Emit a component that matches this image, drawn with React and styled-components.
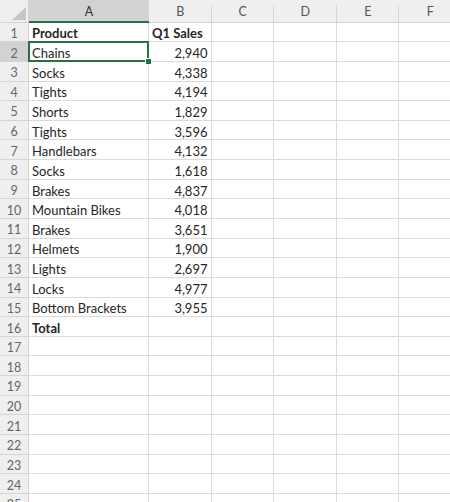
import React from 'react';
import styled, { createGlobalStyle, css } from 'styled-components';

const colors = {
  header: '#efefef',
  headerActive: '#d2d2d2',
  grid: '#dadada',
  headerLine: '#d4d4d4',
  green: '#217346',
  text: '#262626',
  muted: '#666666',
};

const GlobalStyle = createGlobalStyle`
  html, body {
    margin: 0;
    padding: 0;
    background: #ffffff;
    overflow: hidden;
  }
`;

const Sheet = styled.div`
  display: grid;
  grid-template-columns: 29px 120px repeat(5, 62.5px);
  grid-template-rows: 22.6px;
  grid-auto-rows: 19.65px;
  font-family: Lato, 'Open Sans', sans-serif;
  font-size: 13px;
  color: ${colors.text};
  width: 450px;
  height: 502px;
  overflow: hidden;
`;

const Corner = styled.div`
  background: ${colors.header};
  border-right: 1px solid ${colors.headerLine};
  border-bottom: 1px solid ${colors.headerLine};
  box-sizing: border-box;
  position: relative;

  &:after {
    content: '';
    position: absolute;
    right: 2px;
    bottom: 2px;
    width: 0;
    height: 0;
    border-left: 14px solid transparent;
    border-bottom: 13px solid #c6c6c6;
  }
`;

const ColHead = styled.div`
  background: ${p => (p.$active ? colors.headerActive : colors.header)};
  border-bottom: ${p => (p.$active ? `2px solid ${colors.green}` : `1px solid ${colors.headerLine}`)};
  box-sizing: border-box;
  display: flex;
  align-items: center;
  justify-content: center;
  color: ${p => (p.$active ? '#333' : '#555')};
  font-size: 12.5px;
  padding-top: 2px;
  position: relative;

  &:after {
    content: '';
    position: absolute;
    right: 0;
    top: 5px;
    bottom: 0;
    width: 1px;
    background: ${colors.headerLine};
  }
`;

const RowHead = styled.div`
  background: ${p => (p.$active ? colors.headerActive : colors.header)};
  border-right: 1px solid ${p => (p.$active ? colors.green : colors.headerLine)};
  border-bottom: 1px solid ${colors.headerLine};
  box-sizing: border-box;
  display: flex;
  align-items: center;
  justify-content: center;
  color: ${colors.muted};
  font-size: 12.5px;
  padding-top: 3px;
`;

const Cell = styled.div`
  border-right: 1px solid ${colors.grid};
  border-bottom: 1px solid ${colors.grid};
  box-sizing: border-box;
  display: flex;
  align-items: center;
  justify-content: ${p => (p.$num ? 'flex-end' : 'flex-start')};
  padding: 3px 3px 0 3px;
  white-space: nowrap;
  font-weight: ${p => (p.$bold ? 700 : 400)};
  position: relative;

  ${p => p.$active && css`
    &:before {
      content: '';
      position: absolute;
      left: -1px;
      top: -1px;
      right: -1px;
      bottom: -1px;
      border: 2px solid ${colors.green};
      z-index: 1;
    }
    &:after {
      content: '';
      position: absolute;
      right: -4px;
      bottom: -4px;
      width: 5px;
      height: 5px;
      background: ${colors.green};
      border: 1px solid #fff;
      z-index: 2;
    }
  `}
`;

const columns = ['A', 'B', 'C', 'D', 'E', 'F'];

const data = [
  ['Chains', '2,940'],
  ['Socks', '4,338'],
  ['Tights', '4,194'],
  ['Shorts', '1,829'],
  ['Tights', '3,596'],
  ['Handlebars', '4,132'],
  ['Socks', '1,618'],
  ['Brakes', '4,837'],
  ['Mountain Bikes', '4,018'],
  ['Brakes', '3,651'],
  ['Helmets', '1,900'],
  ['Lights', '2,697'],
  ['Locks', '4,977'],
  ['Bottom Brackets', '3,955'],
];

const rows = [
  { a: 'Product', b: 'Q1 Sales', bold: true, textB: true },
  ...data.map(([a, b]) => ({ a, b })),
  { a: 'Total', b: '', bold: true },
];
while (rows.length < 25) rows.push({ a: '', b: '' });

export default function App() {
  return (
    <>
      <GlobalStyle />
      <Sheet>
        <Corner />
        {columns.map(c => (
          <ColHead key={c} $active={c === 'A'}>{c}</ColHead>
        ))}
        {rows.map((r, i) => (
          <React.Fragment key={i}>
            <RowHead $active={i === 1}>{i + 1}</RowHead>
            <Cell $bold={r.bold} $active={i === 1}>{r.a}</Cell>
            <Cell $bold={r.bold} $num={!r.textB}>{r.b}</Cell>
            <Cell />
            <Cell />
            <Cell />
            <Cell />
          </React.Fragment>
        ))}
      </Sheet>
    </>
  );
}
